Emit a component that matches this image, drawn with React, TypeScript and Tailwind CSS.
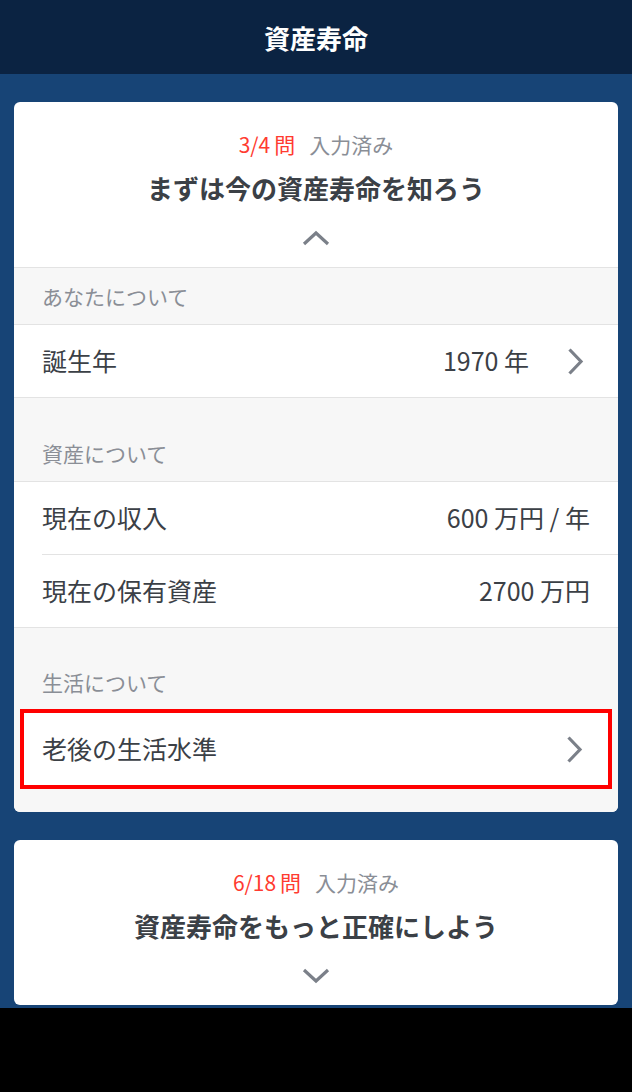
const font = { fontFamily: '"Noto Sans CJK JP", "Noto Sans", sans-serif' };

function ChevronUp() {
	return (
		<svg width="28" height="16" viewBox="0 0 28 16" fill="none">
			<path d="M2 14 L14 3 L26 14" stroke="#7b8089" strokeWidth="3.2" />
		</svg>
	);
}

function ChevronDown() {
	return (
		<svg width="28" height="16" viewBox="0 0 28 16" fill="none">
			<path d="M2 2 L14 13 L26 2" stroke="#7b8089" strokeWidth="3.2" />
		</svg>
	);
}

function ChevronRight() {
	return (
		<svg width="17" height="29" viewBox="0 0 17 29" fill="none">
			<path d="M2.5 2.5 L14 14.5 L2.5 26.5" stroke="#7b8089" strokeWidth="3.2" />
		</svg>
	);
}

function CardHead({
	count,
	title,
	open,
}: {
	count: string;
	title: string;
	open: boolean;
}) {
	return (
		<div className="flex flex-col items-center pt-[28px]">
			<div className="flex h-[28px] items-center gap-[14px] text-[21px] leading-[28px]">
				<span className="text-[#ff3b30]">
					{count}
					<span className="ml-[4px]">問</span>
				</span>
				<span className="text-[#8a8e96]">入力済み</span>
			</div>
			<div className="mt-[14px] h-[32px] text-[26px] font-bold leading-[32px] text-[#3b4046]">
				{title}
			</div>
			<div className="mt-[24px] flex h-[20px] items-center">
				{open ? <ChevronUp /> : <ChevronDown />}
			</div>
		</div>
	);
}

function SectionLabel({ text, h }: { text: string; h: string }) {
	return (
		<div
			className={`flex items-end bg-[#f7f7f7] px-[28px] pb-[15px] text-[21px] leading-[26px] text-[#8a8e96] ${h}`}
		>
			{text}
		</div>
	);
}

function Row({
	label,
	value,
	arrow,
}: {
	label: string;
	value?: string;
	arrow?: boolean;
}) {
	return (
		<div className="bg-white">
			<div
				className={`flex h-[73px] items-center justify-between border-b border-[#e3e3e3] pl-[28px] ${arrow ? "pr-[34px]" : "pr-[28px]"}`}
			>
				<span className="text-[25px] text-[#3b4046]">{label}</span>
				<div className="flex items-center gap-[38px]">
					{value && <span className="text-[25px] text-[#3b4046]">{value}</span>}
					{arrow && <ChevronRight />}
				</div>
			</div>
		</div>
	);
}

export default function App() {
	return (
		<div className="flex h-[1092px] w-[632px] flex-col" style={font}>
			<header className="flex h-[74px] items-center justify-center bg-[#0b2342]">
				<h1 className="text-[26px] font-bold text-white">資産寿命</h1>
			</header>

			<main className="flex h-[934px] flex-col gap-[28px] bg-[#174476] px-[14px] pt-[28px]">
				<section className="overflow-hidden rounded-[6px] bg-white">
					<div className="h-[166px] border-b border-[#e3e3e3]">
						<CardHead count="3/4" title="まずは今の資産寿命を知ろう" open />
					</div>

					<SectionLabel text="あなたについて" h="h-[56px]" />
					<div className="border-t border-[#e3e3e3]">
						<Row label="誕生年" value="1970 年" arrow />
					</div>

					<SectionLabel text="資産について" h="h-[83px]" />
					<div className="border-t border-[#e3e3e3]">
						<div className="bg-white">
							<div className="ml-[28px] flex h-[73px] items-center justify-between border-b border-[#e3e3e3] pr-[28px]">
								<span className="text-[25px] text-[#3b4046]">現在の収入</span>
								<span className="text-[25px] text-[#3b4046]">600 万円 / 年</span>
							</div>
						</div>
						<Row label="現在の保有資産" value="2700 万円" />
					</div>

					<div className="flex h-[81px] items-end bg-[#f7f7f7] px-[28px] pb-[14px] text-[21px] leading-[26px] text-[#8a8e96]">
						生活について
					</div>
					<div className="bg-[#f7f7f7] px-[6px] pb-[23px]">
						<div className="flex h-[80px] items-center justify-between border-4 border-[#ff0000] bg-white pl-[18px] pr-[25px]">
							<span className="text-[25px] text-[#3b4046]">老後の生活水準</span>
							<ChevronRight />
						</div>
					</div>
				</section>

				<section className="h-[165px] overflow-hidden rounded-[6px] bg-white">
					<CardHead count="6/18" title="資産寿命をもっと正確にしよう" open={false} />
				</section>
			</main>

			<div className="flex-1 bg-black" />
		</div>
	);
}
